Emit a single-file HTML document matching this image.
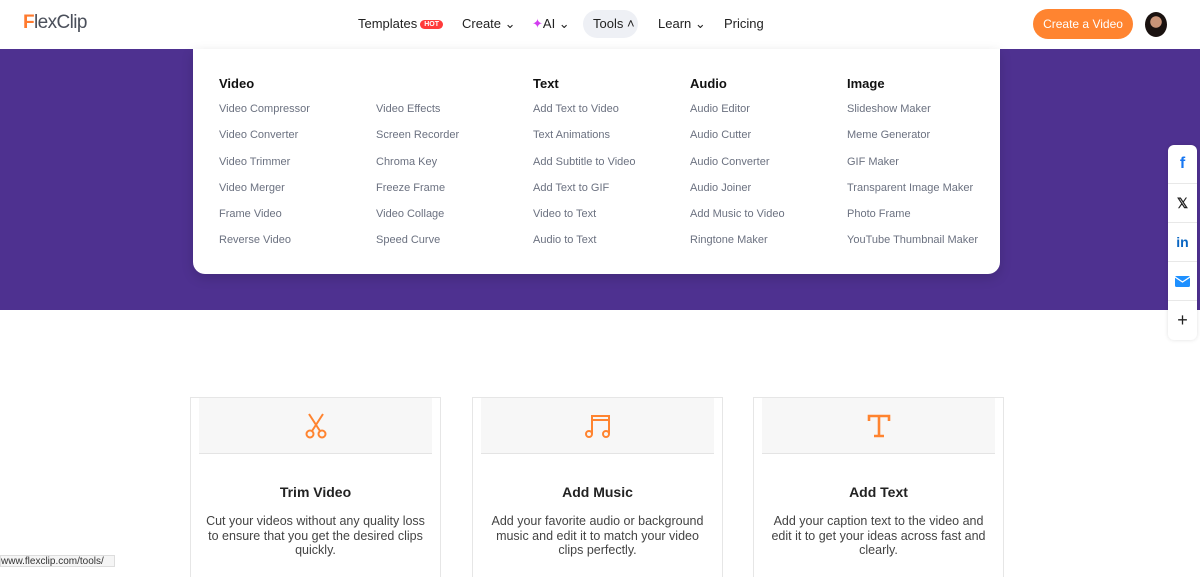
<!DOCTYPE html>
<html><head><meta charset="utf-8"><style>
*{margin:0;padding:0;box-sizing:border-box}
body{width:1200px;height:565px;overflow:hidden;background:#fff;font-family:"Liberation Sans",Arial,sans-serif;position:relative}
.hdr{position:absolute;left:0;top:0;width:1200px;height:49px;background:#fff}
.logo{position:absolute;left:23px;top:12px;font-size:19px;color:#4a4f5a;letter-spacing:-0.6px}
.logo b{color:#ff7a2e;font-weight:700}
.nav{position:absolute;top:16px;font-size:13px;color:#222}
.hot{display:inline-block;background:#ff3b3b;color:#fff;font-size:7px;font-weight:700;border-radius:6px;padding:1px 4px;vertical-align:2px;margin-left:3px}
.tools{position:absolute;left:583px;top:10px;width:55px;height:28px;background:#eef0f5;border-radius:14px}
.cta{position:absolute;left:1033px;top:9px;width:100px;height:30px;background:#ff8430;border-radius:15px;color:#fff;font-size:12px;text-align:center;line-height:30px}
.av{position:absolute;left:1145px;top:12px;width:22px;height:25px;border-radius:50%;background:radial-gradient(circle at 50% 40%,#c99478 0 30%,#1a1210 32%)}
.band{position:absolute;left:0;top:49px;width:1200px;height:261px;background:#4e3190}
.menu{position:absolute;left:193px;top:49px;width:807px;height:225px;background:#fff;border-radius:0 0 12px 12px;box-shadow:0 4px 12px rgba(0,0,0,.15);z-index:2}
.col{position:absolute;top:27px;font-size:11px;color:#6b7180}
.col h4{font-size:13px;color:#111;font-weight:700;margin-bottom:10px;height:17px}
.col div{height:26.3px}
.share{position:absolute;left:1168px;top:145px;width:29px;height:195px;background:#fff;border-radius:6px;box-shadow:0 0 4px rgba(0,0,0,.12);z-index:3}
.share div{height:39px;border-bottom:1px solid #e8e8e8;display:flex;align-items:center;justify-content:center;font-size:14px;font-weight:700}
.share div:last-child{border:none}
.card{position:absolute;top:397px;width:251px;height:180px;border:1px solid #e6e6e6;border-bottom:none}
.card .top{position:absolute;left:8px;top:0;width:233px;height:56px;background:#f7f7f7;border-bottom:1px solid #e4e4e4;display:flex;align-items:center;justify-content:center}
.card h3{position:absolute;top:86px;width:100%;text-align:center;font-size:14px;color:#222}
.card p{position:absolute;top:116px;left:12px;right:12px;text-align:center;font-size:12.5px;line-height:14.5px;color:#444}
.status{position:absolute;left:0;top:555px;width:115px;height:12px;background:#f5f5f5;border:1px solid #ddd;font-size:10px;color:#333;overflow:hidden;line-height:12px;white-space:nowrap}
</style></head><body>
<div class="hdr">
<div class="logo"><b>F</b>lexClip</div>
<div class="nav" style="left:358px">Templates<span class="hot">HOT</span></div>
<div class="nav" style="left:462px">Create ⌄</div>
<div class="nav" style="left:532px"><span style="color:#d23cf0">✦</span>AI ⌄</div>
<div class="tools"></div>
<div class="nav" style="left:593px">Tools ˄</div>
<div class="nav" style="left:658px">Learn ⌄</div>
<div class="nav" style="left:724px">Pricing</div>
<div class="cta">Create a Video</div>
<div class="av"></div>
</div>
<div class="band"></div>
<div class="menu">
<div class="col" style="left:26px"><h4>Video</h4><div>Video Compressor</div><div>Video Converter</div><div>Video Trimmer</div><div>Video Merger</div><div>Frame Video</div><div>Reverse Video</div></div>
<div class="col" style="left:183px"><h4></h4><div>Video Effects</div><div>Screen Recorder</div><div>Chroma Key</div><div>Freeze Frame</div><div>Video Collage</div><div>Speed Curve</div></div>
<div class="col" style="left:340px"><h4>Text</h4><div>Add Text to Video</div><div>Text Animations</div><div>Add Subtitle to Video</div><div>Add Text to GIF</div><div>Video to Text</div><div>Audio to Text</div></div>
<div class="col" style="left:497px"><h4>Audio</h4><div>Audio Editor</div><div>Audio Cutter</div><div>Audio Converter</div><div>Audio Joiner</div><div>Add Music to Video</div><div>Ringtone Maker</div></div>
<div class="col" style="left:654px"><h4>Image</h4><div>Slideshow Maker</div><div>Meme Generator</div><div>GIF Maker</div><div>Transparent Image Maker</div><div>Photo Frame</div><div>YouTube Thumbnail Maker</div></div>
</div>
<div class="share">
<div style="color:#1877f2;font-size:16px">f</div>
<div style="color:#222">𝕏</div>
<div style="color:#0a66c2">in</div>
<div><svg width="15" height="11"><rect width="15" height="11" rx="1.5" fill="#1e90ff"/><path d="M0 1l7.5 5L15 1" stroke="#fff" stroke-width="1.3" fill="none"/></svg></div>
<div style="font-weight:400;font-size:18px;color:#222">+</div>
</div>
<div class="card" style="left:190px"><div class="top"><svg width="26" height="28" viewBox="0 0 26 28" fill="none" stroke="#ff8430" stroke-width="2"><path d="M6 2l11 17M20 2L9 19"/><circle cx="7" cy="22" r="3.5"/><circle cx="19" cy="22" r="3.5"/></svg></div><h3>Trim Video</h3><p>Cut your videos without any quality loss to ensure that you get the desired clips quickly.</p></div>
<div class="card" style="left:472px"><div class="top"><svg width="28" height="26" viewBox="0 0 28 26" fill="none" stroke="#ff8430" stroke-width="2"><path d="M8 21V3h17v18M8 7h17"/><circle cx="5" cy="21" r="3"/><circle cx="22" cy="21" r="3"/></svg></div><h3>Add Music</h3><p>Add your favorite audio or background music and edit it to match your video clips perfectly.</p></div>
<div class="card" style="left:753px"><div class="top"><svg width="26" height="26" viewBox="0 0 26 26" fill="none" stroke="#ff8430" stroke-width="2.6"><path d="M3 8V3h20v5M13 3v21M8 23h10"/></svg></div><h3>Add Text</h3><p>Add your caption text to the video and edit it to get your ideas across fast and clearly.</p></div>
<div class="status">www.flexclip.com/tools/</div>
</body></html>
